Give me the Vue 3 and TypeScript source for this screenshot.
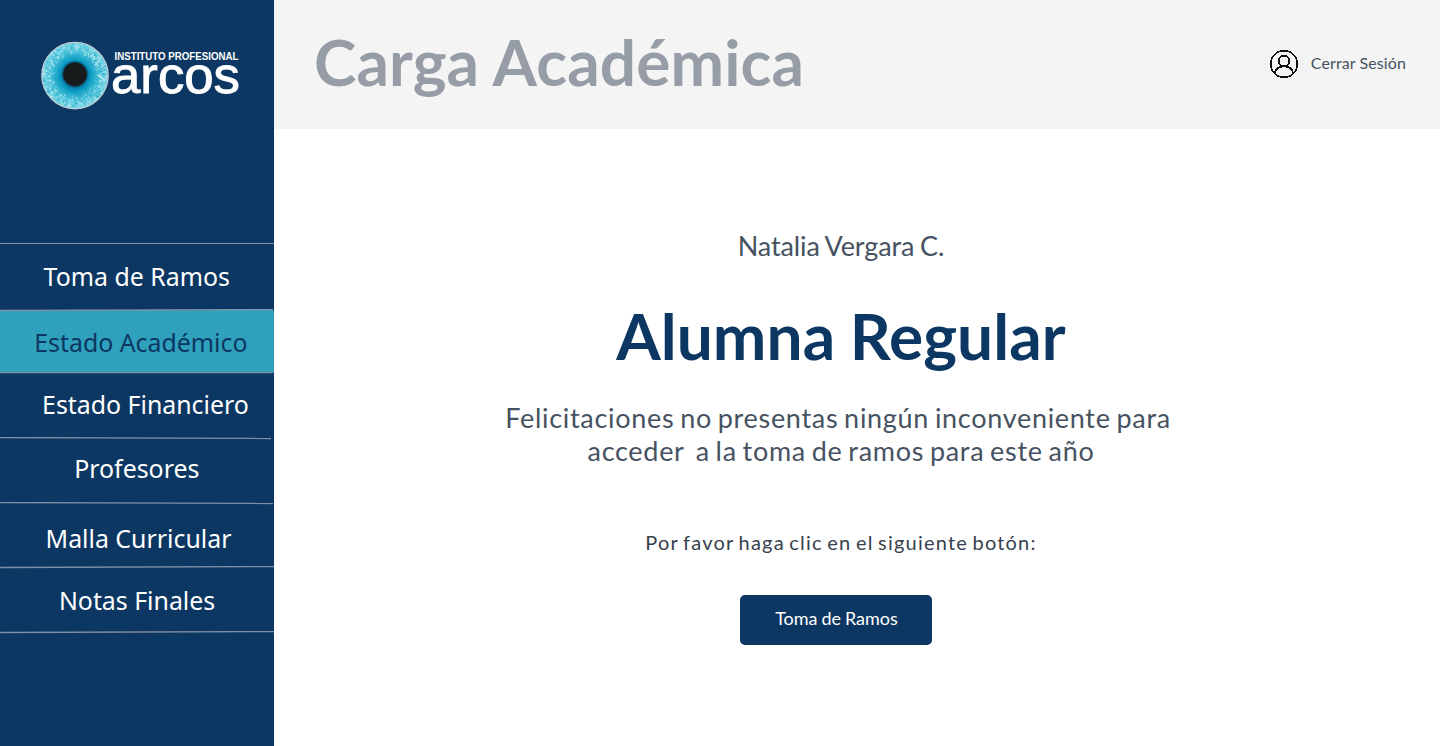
<script setup lang="ts">
interface NavItem {
  id: string
  label: string
  active?: boolean
  // Lower divider: vertical position at each end and horizontal end
  from: number
  to: number
  end: number
}

const items: NavItem[] = [
  { id: 'toma', label: 'Toma de Ramos', from: 1.5, to: 0.5, end: 273 },
  { id: 'academico', label: 'Estado Académico', active: true, from: 0.5, to: 0.5, end: 273 },
  { id: 'financiero', label: 'Estado Financiero', from: 0.5, to: 1.5, end: 271 },
  { id: 'profesores', label: 'Profesores', from: 0.5, to: 1.5, end: 273 },
  { id: 'malla', label: 'Malla Curricular', from: 1.5, to: 0.5, end: 274 },
  { id: 'notas', label: 'Notas Finales', from: 1.5, to: 0.5, end: 274 },
]

interface Fiber {
  d: string
  color: string
  width: number
}

// Small deterministic generator for the fibres of the iris
let seed = 17
const rnd = (): number => {
  seed = (seed * 16807) % 2147483647
  return seed / 2147483647
}
const tones = ['#d6f5f8', '#8fe0ec', '#35b5d3', '#25a9cb', '#5fcde0', '#b5edf3']
const fibers: Fiber[] = Array.from({ length: 620 }, () => {
  const a = rnd() * Math.PI * 2
  const r1 = 15 + Math.sqrt(rnd()) * 16
  const r2 = Math.min(r1 + 1 + rnd() * 2.5, 32.5)
  const b = a + (rnd() - 0.5) * 0.06
  const x = (r: number, t: number) => (34 + r * Math.cos(t)).toFixed(2)
  const y = (r: number, t: number) => (34 + r * Math.sin(t)).toFixed(2)
  const tone = r1 < 20 ? 2 + Math.floor(rnd() * 2) : Math.floor(rnd() * tones.length)
  return {
    d: `M${x(r1, a)} ${y(r1, a)}L${x(r2, b)} ${y(r2, b)}`,
    color: tones[tone],
    width: 0.8 + rnd() * 0.7,
  }
})
</script>

<template>
  <div class="page">
    <aside class="sidebar">
      <svg class="logo" width="202" height="70" viewBox="0 0 202 70">
        <defs>
          <radialGradient id="iris">
            <stop offset="0.3" stop-color="#04759c" />
            <stop offset="0.48" stop-color="#0c9cc4" />
            <stop offset="0.72" stop-color="#4cc3da" />
            <stop offset="1" stop-color="#83d8e6" />
          </radialGradient>
          <radialGradient id="pupil">
            <stop offset="0.8" stop-color="#171b1c" />
            <stop offset="0.88" stop-color="#06577a" stop-opacity="0.8" />
            <stop offset="1" stop-color="#055f80" stop-opacity="0" />
          </radialGradient>
        </defs>
        <g transform="translate(0 0.6)">
          <circle cx="34" cy="34" r="33.2" fill="url(#iris)" />
          <path v-for="(f, i) in fibers" :key="i" :d="f.d" :stroke="f.color" :stroke-width="f.width" opacity="0.7" />
          <circle cx="34" cy="34" r="33.2" fill="none" stroke="#b9cbd5" stroke-width="1.3" />
          <circle cx="34" cy="32.7" r="14.2" fill="url(#pupil)" />
        </g>
        <text class="logo-small" x="73.5" y="19" textLength="124" lengthAdjust="spacingAndGlyphs">INSTITUTO PROFESIONAL</text>
        <text class="logo-big" x="70" y="51.5" textLength="129" lengthAdjust="spacingAndGlyphs">arcos</text>
      </svg>
      <nav class="nav">
        <a v-for="item in items" :key="item.id" class="item" :class="[item.id, { active: item.active }]">
          <span class="label">{{ item.label }}</span>
          <svg class="rule" width="274" height="3" viewBox="0 0 274 3">
            <line x1="0" :y1="item.from" :x2="item.end" :y2="item.to" />
          </svg>
        </a>
      </nav>
    </aside>
    <div class="content">
      <header class="header">
        <h1 class="title">Carga Académica</h1>
        <a class="logout">
          <svg width="30" height="30" viewBox="0 0 30 30" fill="none" stroke="#111" stroke-width="1.7" shape-rendering="crispEdges">
            <circle cx="15" cy="15" r="13.3" />
            <circle cx="15" cy="12" r="5.4" />
            <path d="M5.8 23.8C7 20.2 10.4 17.4 15 17.4C19.6 17.4 23 20.2 24.2 23.8" />
          </svg>
          <span>Cerrar Sesión</span>
        </a>
      </header>
      <main class="main">
        <p class="name">Natalia Vergara C.</p>
        <h2 class="status">Alumna Regular</h2>
        <p class="message"><span class="first">Felicitaciones no presentas ningún inconveniente para</span><span class="second">acceder&nbsp; a la toma de ramos para este año</span></p>
        <p class="hint">Por favor haga clic en el siguiente botón:</p>
        <button class="action" type="button">Toma de Ramos</button>
      </main>
    </div>
  </div>
</template>

<style>
body {
  margin: 0;
  overflow: hidden;
}
</style>

<style scoped>
.page {
  display: flex;
  width: 1440px;
  height: 746px;
  overflow: hidden;
  background: #fff;
  font-family: Lato, 'Liberation Sans', sans-serif;
  color: #465261;
}
.sidebar {
  display: flex;
  flex-direction: column;
  flex: none;
  width: 274px;
  background: #0c3762;
}
.logo {
  flex: none;
  margin: 41px 0 0 41px;
  overflow: visible;
}
.logo-small,
.logo-big {
  font-family: 'Liberation Sans', Arial, sans-serif;
  fill: #fff;
}
.logo-small {
  font-size: 10.4px;
  font-weight: 700;
}
.logo-big {
  font-size: 52px;
  stroke: #fff;
  stroke-width: 0.9;
}
.nav {
  display: flex;
  flex-direction: column;
  margin-top: 132px;
  border-top: 1px solid #8090a4;
}
.item {
  position: relative;
  display: flex;
  justify-content: center;
  box-sizing: border-box;
  width: 274px;
  font: 400 26px/36px 'Noto Sans', sans-serif;
  color: #fff;
  white-space: nowrap;
}
.label {
  transform: translateX(-0.6px) scaleX(0.957);
}
.rule {
  position: absolute;
  left: 0;
  bottom: -2px;
  stroke: #8090a4;
  stroke-width: 1.3;
  z-index: 1;
}
.toma { height: 66px; padding-top: 14px; }
.academico { height: 63px; padding: 14px 0 0 8px; }
.financiero { height: 65px; padding: 13px 0 0 18px; }
.profesores { height: 65px; padding-top: 12px; }
.malla { height: 64px; padding: 17px 0 0 4px; }
.notas { height: 65px; padding: 15px 0 0 1px; }
.active {
  background: #2fa1bd;
  color: #0c3762;
  border-radius: 0 2px 2px 0;
}
.content {
  flex: 1;
}
.header {
  display: flex;
  justify-content: space-between;
  box-sizing: border-box;
  height: 129px;
  padding: 0 34px 0 40px;
  background: #f4f4f4;
}
.title {
  margin: 23px 0 0;
  font-size: 64px;
  line-height: 78px;
  font-weight: 700;
  letter-spacing: 0.1px;
  color: #969da6;
}
.logout {
  display: flex;
  align-items: center;
  gap: 12px;
  height: 30px;
  margin-top: 49px;
  font-size: 16px;
  line-height: 28px;
  letter-spacing: 0.1px;
}
.logout span {
  margin-top: -2px;
}
.main {
  display: flex;
  flex-direction: column;
  align-items: center;
  padding-right: 32px;
}
.name {
  margin: 101px 0 0;
  font-size: 27px;
  line-height: 32px;
  letter-spacing: -0.12px;
  word-spacing: -1px;
}
.status {
  margin: 35px 0 0;
  font-size: 64px;
  line-height: 78px;
  font-weight: 700;
  letter-spacing: 0.1px;
  word-spacing: -1.2px;
  color: #0c3762;
}
.message {
  display: flex;
  flex-direction: column;
  align-items: center;
  margin: 26px 0 0;
  font-size: 27px;
  line-height: 33px;
  letter-spacing: 0.7px;
  word-spacing: -1.8px;
  white-space: nowrap;
}
.first {
  margin-left: -6px;
}
.hint {
  margin: 63px 0 0;
  font-size: 20px;
  line-height: 24px;
  letter-spacing: 1.2px;
  word-spacing: -1.8px;
  color: #36414d;
}
.action {
  width: 192px;
  height: 50px;
  margin: 41px 10px 0 0;
  padding: 0 0 4px 1px;
  border: 0;
  border-radius: 5px;
  background: #0c3762;
  font: 400 18px/24px Lato, sans-serif;
  word-spacing: -0.7px;
  color: #fff;
}
</style>
